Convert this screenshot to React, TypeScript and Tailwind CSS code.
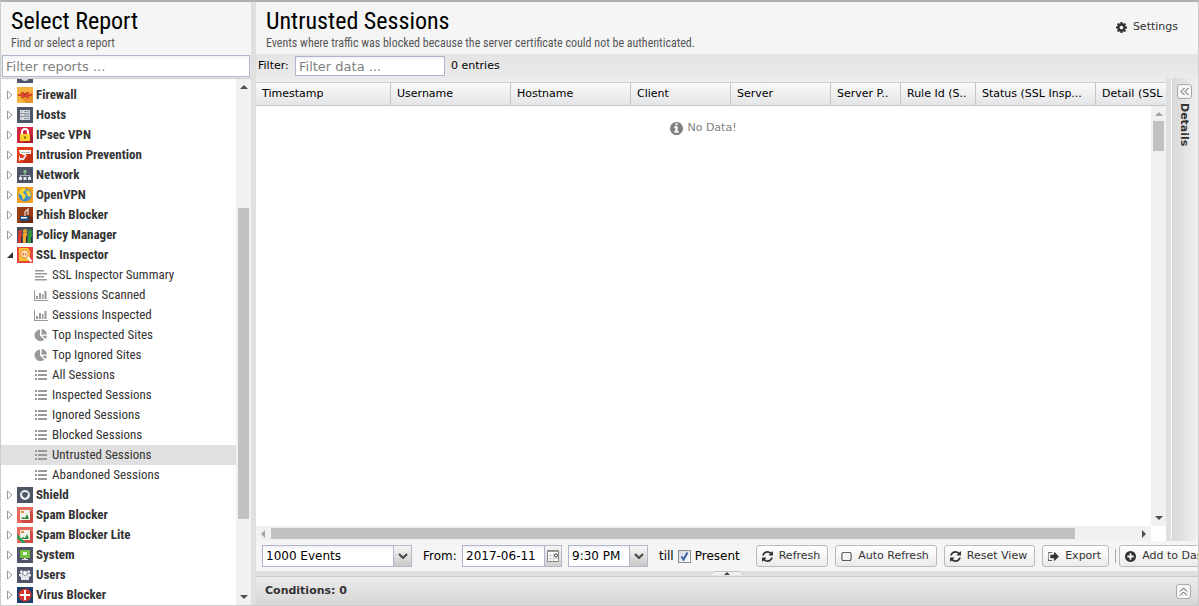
import { useState, type ReactNode } from 'react'

// ===== Icons
const GLYPHS = {
  cog: 'M1152 896q0-106-75-181t-181-75-181 75-75 181 75 181 181 75 181-75 75-181zm512-109v222q0 12-8 23t-20 13l-185 28q-19 54-39 91 35 50 107 138 10 12 10 25t-9 23q-27 37-99 108t-94 71q-12 0-26-9l-138-108q-44 23-91 38-16 136-29 186-7 28-36 28h-222q-14 0-24.5-8.5t-11.5-21.5l-28-184q-49-16-90-37l-141 107q-10 9-25 9-14 0-25-11-126-114-165-168-7-10-7-23 0-12 8-23 15-21 51-66.5t54-70.5q-27-50-41-99l-183-27q-13-2-21-12.5t-8-23.5v-222q0-12 8-23t19-13l186-28q14-46 39-92-40-57-107-138-10-12-10-24 0-10 9-23 26-36 98.5-107.5t94.5-71.5q13 0 26 10l138 107q44-23 91-38 16-136 29-186 7-28 36-28h222q14 0 24.5 8.5t11.5 21.5l28 184q49 16 90 37l142-107q9-9 24-9 13 0 25 10 129 119 165 170 7 8 7 22 0 12-8 23-15 21-51 66.5t-54 70.5q26 50 41 98l183 28q13 2 21 12.5t8 23.5z',
  refresh: 'M1639 1056q0 5-1 7-64 268-268 434.5t-478 166.5q-146 0-282.5-55t-243.5-157l-129 129q-19 19-45 19t-45-19-19-45v-448q0-26 19-45t45-19h448q26 0 45 19t19 45-19 45l-137 137q71 66 161 102t187 36q134 0 250-65t186-179q11-17 53-117 8-23 30-23h192q13 0 22.5 9.5t9.5 22.5zm25-800v448q0 26-19 45t-45 19h-448q-26 0-45-19t-19-45 19-45l138-138q-148-137-349-137-134 0-250 65t-186 179q-11 17-53 117-8 23-30 23h-199q-13 0-22.5-9.5t-9.5-22.5v-7q65-268 270-434.5t480-166.5q146 0 284 55.5t245 156.5l130-129q19-19 45-19t45 19 19 45z',
  square: 'M1312 256h-832q-119 0-203 84t-84 203v706q0 119 84 203t203 84h832q119 0 203-84t84-203v-706q0-119-84-203t-203-84zm-832 128h832q66 0 113 47t47 113v704q0 66-47 113t-113 47h-832q-66 0-113-47t-47-113v-704q0-66 47-113t113-47z',
  signOut: 'M704 1440q0 4 1 20t.5 26.5-3 23.5-10 19.5-20.5 6.5h-320q-119 0-203.5-84.5t-84.5-203.5v-704q0-119 84.5-203.5t203.5-84.5h320q13 0 22.5 9.5t9.5 22.5q0 4 1 20t.5 26.5-3 23.5-10 19.5-20.5 6.5h-320q-66 0-113 47t-47 113v704q0 66 47 113t113 47h312l11.5 1 11.5 3 8 5.5 7 9 2 13.5zm928-544q0 26-19 45l-544 544q-19 19-45 19t-45-19-19-45v-288h-448q-26 0-45-19t-19-45v-384q0-26 19-45t45-19h448v-288q0-26 19-45t45-19 45 19l544 544q19 19 19 45z',
  plus: 'M1344 960v-128q0-26-19-45t-45-19h-256v-256q0-26-19-45t-45-19h-128q-26 0-45 19t-19 45v256h-256q-26 0-45 19t-19 45v128q0 26 19 45t45 19h256v256q0 26 19 45t45 19h128q26 0 45-19t19-45v-256h256q26 0 45-19t19-45zm320-64q0 209-103 385.5t-279.5 279.5-385.5 103-385.5-103-279.5-279.5-103-385.5 103-385.5 279.5-279.5 385.5-103 385.5 103 279.5 279.5 103 385.5z',
  info: 'M1152 1376v-160q0-14-9-23t-23-9h-96v-512q0-14-9-23t-23-9h-320q-14 0-23 9t-9 23v160q0 14 9 23t23 9h96v320h-96q-14 0-23 9t-9 23v160q0 14 9 23t23 9h448q14 0 23-9t9-23zm-128-896v-160q0-14-9-23t-23-9h-192q-14 0-23 9t-9 23v160q0 14 9 23t23 9h192q14 0 23-9t9-23zm640 416q0 209-103 385.5t-279.5 279.5-385.5 103-385.5-103-279.5-279.5-103-385.5 103-385.5 279.5-279.5 385.5-103 385.5 103 279.5 279.5 103 385.5z',
}

function Glyph({ name, className }: { name: keyof typeof GLYPHS; className?: string }) {
  return (
    <svg viewBox="128 128 1536 1536" className={className ?? 'size-[11px] shrink-0'} fill="currentColor" fillRule="evenodd">
      <path d={GLYPHS[name]} />
    </svg>
  )
}

type Kind = 'text' | 'bars' | 'pie' | 'list'

const KIND_ICONS: Record<Kind, ReactNode> = {
  text: <path d="M1 2h9v1.500H1zM1 5h12v1.500H1zM1 8h9v1.500H1zM1 11h12v1.500H1z" />,
  bars: <path d="M0 2h1v10h13v1H0zM2 8h2v3H2zM5 5h2v6H5zM8 6h1.500v5H8zM10.500 3h2v8h-2z" />,
  pie: <path d="M6 1.500v6l4.300 4.300A6 5.800 0 1 1 6 1.500zM7.500 1A5.600 5.600 0 0 1 13 6.500H7.500zM8 7.700h5A6 6 0 0 1 11.500 11z" />,
  list: <path d="M1 2h2v2H1zM4 2h9v2H4zM1 6h2v2H1zM4 6h9v2H4zM1 10h2v2H1zM4 10h9v2H4z" />,
}

const SLATE = '#4d5566'

// 16x16 tiles, one for each app
const APP_ICONS: Record<string, ReactNode> = {
  Events: (
    <>
      <path fill={SLATE} d="M0 0h16v16H0z" />
      <circle cx="8" cy="10" r="4" fill="#dfe3e8" />
    </>
  ),
  Firewall: (
    <>
      <path fill="#f3b13f" d="M0 0h16v16H0z" />
      <path fill="#e8912a" d="M4 11L15 5l1 1v10H9z" />
      <path fill="#d9482b" d="M1 7h3V5h3v1h2V5h3v2h3v2h-3v2H9v-1H7v1H4V9H1z" />
      <path fill="#c23a22" d="M7 6h2v4H7z" />
    </>
  ),
  Hosts: (
    <>
      <path fill={SLATE} d="M0 0h16v16H0z" />
      <path fill="#d9dde1" d="M3 3h10v3H3zM3 6.500h10v3H3zM3 10h10v3H3z" />
      <path fill="#8f97a2" d="M4 4h1v1H4zM4 7.500h1v1H4zM4 11h1v1H4zM7 4h5v1H7zM7 7.500h5v1H7zM7 11h5v1H7z" />
    </>
  ),
  'IPsec VPN': (
    <>
      <path fill="#cf2740" d="M0 0h16v16H0z" />
      <path fill="#a91d33" d="M12 6l4 4v6H6z" />
      <path fill="none" stroke="#fff" strokeWidth="2" d="M5 8V5a3 3 0 0 1 6 0v3" />
      <path fill="#f8d12c" d="M3 7h10v7H3z" />
      <path fill="#a9801a" d="M7 9h2v3H7z" />
    </>
  ),
  'Intrusion Prevention': (
    <>
      <path fill="#e43d1b" d="M0 0h16v16H0z" />
      <path fill="#c43014" d="M9 10l5-5 2 2v9H5z" />
      <path fill="#fff" d="M2 3h12v4H9L8 8H6L5 7H3z" />
      <path fill="#b8b8b8" d="M4 5h9v1H4z" />
      <path fill="#e4e7ea" d="M2 9h1v5H2zM3 11h3l2-3h2l-3 5H3z" />
    </>
  ),
  Network: (
    <>
      <path fill={SLATE} d="M0 0h16v16H0z" />
      <path fill="#7fc38c" d="M6.500 3h3v3h-3z" />
      <path fill="#aab2ba" d="M7.500 6h1v2H13v2h-1V9H4v1H3V8h4.500z" />
      <path fill="#e4e8ea" d="M2 10h3v3H2zM6.500 10h3v3h-3zM11 10h3v3h-3z" />
    </>
  ),
  OpenVPN: (
    <>
      <path fill="#f6a11c" d="M0 0h16v16H0z" />
      <circle cx="8" cy="8" r="6.500" fill="#3d8ed0" />
      <path fill="#f8d733" d="M3 3l3-2 3 1-1 2-2 1 1 2 2 1-1 3-2 2-1-4-3-3zM10 3l3 2 1 3-2 2-2-2-1-3z" />
    </>
  ),
  'Phish Blocker': (
    <>
      <path fill="#9a3d16" d="M0 0h16v16H0z" />
      <path fill="#6d2a10" d="M12 8l4 3v5H5l-2-2z" />
      <path fill="#234f7c" d="M3 9h9v5H3z" />
      <path fill="#fff" d="M4 10h6v1.500H4z" />
      <path fill="none" stroke="#e8e2dc" strokeWidth="1.200" d="M8 9V5l3-3v6" />
    </>
  ),
  'Policy Manager': (
    <>
      <path fill="#48525d" d="M0 0h16v16H0z" />
      <path fill="#d93832" d="M1 7h4v9H1z" />
      <path fill="#f0a72a" d="M6 6h4v10H6z" />
      <path fill="#2f9e3b" d="M11 7h4v9h-4z" />
      <circle cx="3" cy="5" r="2" fill="#d93832" />
      <circle cx="8" cy="4" r="2" fill="#f0a72a" />
      <circle cx="13" cy="5" r="2" fill="#2f9e3b" />
      <path fill="#25313a" d="M4 10h1v6H4zM9 9h1v7H9zM14 10h1v6h-1z" />
    </>
  ),
  'SSL Inspector': (
    <>
      <path fill="#e5453a" d="M0 0h16v16H0z" />
      <path fill="#f6c032" d="M2 1h9l2 3v10H2z" />
      <circle cx="7.500" cy="7" r="4" fill="#fbe9c5" stroke="#f08a2c" />
      <path fill="#e8782a" d="M5.500 6h1.500v2.500H5.500zM8 6h1.500v2.500H8z" />
      <path stroke="#fff" strokeWidth="2" d="M10.500 10l4 4.500" />
    </>
  ),
  Shield: (
    <>
      <path fill={SLATE} d="M0 0h16v16H0z" />
      <circle cx="8" cy="8" r="5" fill="#e9ebee" />
      <path fill={SLATE} d="M5 6l3-1 3 1q0 4-3 5-3-1-3-5z" />
    </>
  ),
  'Spam Blocker': (
    <>
      <path fill="#e8685c" d="M0 0h16v16H0z" />
      <path fill="#cf4a42" d="M13 3l3 3v10H6l-3-3z" />
      <path fill="#f4f1ea" d="M3 3h10v10H3z" />
      <path fill="#2f8f3f" d="M4 12l2-2 2 1 2-4 2 5z" />
      <path fill="#d9903a" d="M4 4h3v2H4z" />
    </>
  ),
  System: (
    <>
      <path fill={SLATE} d="M0 0h16v16H0z" />
      <path fill="#72c33f" d="M3 3h10v8H3z" />
      <path fill="#e9f7df" d="M6 5h4v3H6z" />
      <path fill="#dfe3e6" d="M7 11h2v1h2v1H5v-1h2z" />
    </>
  ),
  Users: (
    <>
      <path fill={SLATE} d="M0 0h16v16H0z" />
      <circle cx="4.500" cy="5" r="1.700" fill="#e4e7ea" />
      <circle cx="11.500" cy="5" r="1.700" fill="#e4e7ea" />
      <path fill="#e4e7ea" d="M2 7h12v2l-2 1v3H4v-3L2 9z" />
      <circle cx="8" cy="6" r="2.400" fill="#fff" stroke={SLATE} strokeWidth=".6" />
    </>
  ),
  'Virus Blocker': (
    <>
      <path fill="#1d3f6b" d="M0 0h16v16H0z" />
      <circle cx="8" cy="8" r="6.500" fill="#d4342b" />
      <path fill="#fff" d="M7 3h2v4h4v2H9v4H7V9H3V7h4z" />
    </>
  ),
}

function AppIcon({ name }: { name: string }) {
  const lite = name === 'Spam Blocker Lite'
  return (
    <svg viewBox="0 0 16 16" className="size-4 shrink-0">
      {APP_ICONS[lite ? 'Spam Blocker' : name]}
      {lite && <path fill="#2aa05a" d="M0 7l9 9H5L0 11z" />}
    </svg>
  )
}

// ===== Data
const GROUPS = [
  'Events', 'Firewall', 'Hosts', 'IPsec VPN', 'Intrusion Prevention', 'Network', 'OpenVPN',
  'Phish Blocker', 'Policy Manager', 'SSL Inspector', 'Shield', 'Spam Blocker',
  'Spam Blocker Lite', 'System', 'Users', 'Virus Blocker',
]

const REPORTS: { title: string; kind: Kind }[] = [
  { title: 'SSL Inspector Summary', kind: 'text' },
  { title: 'Sessions Scanned', kind: 'bars' },
  { title: 'Sessions Inspected', kind: 'bars' },
  { title: 'Top Inspected Sites', kind: 'pie' },
  { title: 'Top Ignored Sites', kind: 'pie' },
  { title: 'All Sessions', kind: 'list' },
  { title: 'Inspected Sessions', kind: 'list' },
  { title: 'Ignored Sessions', kind: 'list' },
  { title: 'Blocked Sessions', kind: 'list' },
  { title: 'Untrusted Sessions', kind: 'list' },
  { title: 'Abandoned Sessions', kind: 'list' },
]

const COLUMNS = [
  { title: 'Timestamp', width: 'w-[135px]' },
  { title: 'Username', width: 'w-[120px]' },
  { title: 'Hostname', width: 'w-[120px]' },
  { title: 'Client', width: 'w-[100px]' },
  { title: 'Server', width: 'w-[100px]' },
  { title: 'Server P..', width: 'w-[70px]' },
  { title: 'Rule Id (S..', width: 'w-[75px]' },
  { title: 'Status (SSL Insp...', width: 'w-[120px]' },
  { title: 'Detail (SSL', width: 'w-[120px]' },
]

// ===== Parts
const CONDENSED = "font-['Roboto_Condensed','Liberation_Sans_Narrow',Roboto,sans-serif]"
const FIELD = 'border border-[#b1b5cb] bg-linear-to-b from-[#eef1f3] to-white to-20% text-black outline-none'

function Arrow({ dir, className }: { dir: 'up' | 'down' | 'left' | 'right'; className?: string }) {
  const d = {
    up: 'M0 6h8L4 2z',
    down: 'M0 2h8L4 6z',
    left: 'M6 0v8L2 4z',
    right: 'M2 0v8l4-4z',
  }[dir]
  return (
    <svg viewBox="0 0 8 8" className={`size-2 shrink-0 ${className ?? 'text-[#505050]'}`} fill="currentColor">
      <path d={d} />
    </svg>
  )
}

function DropButton() {
  return (
    <span className="pointer-events-none flex w-[18px] items-center justify-center border border-l-0 border-[#b5b8c8] bg-linear-to-b from-[#f6f6f6] to-[#c9c9c9]">
      <svg viewBox="0 0 10 6" className="h-[6px] w-[10px]" fill="none" stroke="#444" strokeWidth="2">
        <path d="M1 1l4 4 4-4" />
      </svg>
    </span>
  )
}

function ToolButton({ icon, children }: { icon: keyof typeof GLYPHS; children: ReactNode }) {
  return (
    <button className="flex h-[22px] shrink-0 items-center gap-1.5 rounded-[3px] border border-[#bbb] bg-linear-to-b from-white to-[#ebebeb] pr-[7px] pl-[5px] text-[11px] whitespace-nowrap text-[#333]">
      <Glyph name={icon} />
      {children}
    </button>
  )
}

function CollapseButton({ dir, label }: { dir: 'left' | 'up'; label: string }) {
  return (
    <button aria-label={label} className="flex size-[15px] shrink-0 items-center justify-center rounded-[3px] border border-[#aaa] bg-[#f6f6f6]">
      <svg viewBox="0 0 9 9" className="size-[9px]" fill="none" stroke="#555">
        {dir === 'left' ? <path d="M4.500 1L1 4.500 4.500 8M8.500 1L5 4.500 8.500 8" /> : <path d="M1 4.500L4.500 1 8 4.500M1 8.500L4.500 5 8 8.500" />}
      </svg>
    </button>
  )
}

function Sidebar() {
  const [selected, setSelected] = useState('Untrusted Sessions')

  return (
    <aside className="flex w-[250px] shrink-0 flex-col">
      <header className={`h-[53px] bg-[#f5f5f5] px-2.5 pt-[5px] ${CONDENSED}`}>
        <h1 className="text-2xl leading-7 text-black">Select Report</h1>
        <p className="text-xs leading-4 text-[#555]">Find or select a report</p>
      </header>
      <div className="flex h-6 border-b border-[#ccc] bg-[#e8e8e8] px-px">
        <input aria-label="Filter reports" placeholder="Filter reports ..." className={`h-[22px] w-full px-[3px] text-[13px] placeholder:text-[#808080] ${FIELD}`} />
      </div>

      <div className="flex min-h-0 flex-1">
        <ul className={`flex min-w-0 flex-1 flex-col justify-end overflow-hidden bg-white text-[13px] text-[#333] ${CONDENSED}`}>
          {GROUPS.map((g) => (
            <li key={g} className="shrink-0">
              <button className="flex h-5 w-full items-center gap-[3px] pl-[5px] text-left font-bold">
                <svg viewBox="0 0 8 10" className="h-2.5 w-2 shrink-0">
                  {g === 'SSL Inspector'
                    ? <path d="M7 2v6H1z" fill="#333" />
                    : <path d="M1.500 1v8l4.500-4z" fill="#fff" stroke="#999" />}
                </svg>
                <AppIcon name={g} />
                {g}
              </button>
              {g === 'SSL Inspector' && (
                <ul>
                  {REPORTS.map((r) => (
                    <li key={r.title}>
                      <button
                        onClick={() => setSelected(r.title)}
                        className={`flex h-5 w-full items-center gap-1 pl-[33px] text-left ${r.title === selected ? 'bg-[#e0e0e0]' : ''}`}
                      >
                        <svg viewBox="0 0 14 14" className="size-[14px] shrink-0" fill="#999">{KIND_ICONS[r.kind]}</svg>
                        {r.title}
                      </button>
                    </li>
                  ))}
                </ul>
              )}
            </li>
          ))}
        </ul>
        <div className="flex w-[15px] flex-col items-center bg-[#f1f1f1] py-1">
          <Arrow dir="up" />
          <div className="flex w-full flex-1 flex-col px-0.5">
            <div className="flex-[117]" />
            <div className="flex-[311] bg-[#c1c1c1]" />
            <div className="flex-[74]" />
          </div>
          <Arrow dir="down" />
        </div>
      </div>
    </aside>
  )
}

function Grid() {
  return (
    <div className="flex min-w-0 flex-1 flex-col">
      <div className="overflow-hidden border-t border-[#d0d0d0] bg-white">
        <table className="w-[960px] table-fixed border-separate border-spacing-0 text-[11px]">
          <thead>
            <tr className="h-[23px] bg-linear-to-b from-[#f9f9f9] to-[#e3e4e6]">
              {COLUMNS.map((c) => (
                <th key={c.title} className={`overflow-hidden border-r border-b border-[#c5c5c5] p-0 pb-px pl-1.5 text-left leading-5 font-normal whitespace-nowrap text-black ${c.width}`}>
                  {c.title}
                </th>
              ))}
            </tr>
          </thead>
        </table>
      </div>

      <div className="flex min-h-0 flex-1 bg-white">
        <div className="flex flex-1 items-start justify-center gap-1 pt-3.5 text-[11px] text-[#808080]">
          <div className="flex items-center gap-1">
            <Glyph name="info" className="size-[13px] shrink-0" />
            <span>No Data!</span>
          </div>
        </div>
        <div className="flex w-[15px] flex-col items-center bg-[#f1f1f1] py-1">
          <Arrow dir="up" className="text-[#a3a3a3]" />
          <div className="flex w-full flex-1 flex-col px-0.5 pt-[3px]">
            <div className="h-[30px] bg-[#c1c1c1]" />
          </div>
          <Arrow dir="down" />
        </div>
      </div>
      <div className="flex h-[15px] bg-white">
        <div className="flex flex-1 items-center bg-[#f1f1f1] px-[3px]">
          <Arrow dir="left" className="text-[#a3a3a3]" />
          <div className="flex h-[11px] flex-1 px-1">
            <div className="w-[93%] bg-[#c1c1c1]" />
          </div>
          <Arrow dir="right" />
        </div>
        <div className="w-[15px]" />
      </div>
    </div>
  )
}

function BottomBar() {
  const [present, setPresent] = useState(true)

  return (
    <div className="flex h-[30px] items-center overflow-hidden bg-[#f5f5f5] pl-1.5 text-xs text-black">
      <div className="flex h-[22px] w-[150px] shrink-0">
        <select aria-label="Limit" className={`min-w-0 flex-1 appearance-none px-[3px] ${FIELD}`}>
          <option>1000 Events</option>
        </select>
        <DropButton />
      </div>
      <label htmlFor="from" className="ml-[11px] w-[33px] shrink-0">From:</label>
      <div className="ml-1.5 flex h-[22px] w-[100px] shrink-0">
        <input id="from" defaultValue="2017-06-11" className={`min-w-0 flex-1 px-[3px] ${FIELD}`} />
        <button aria-label="Pick a date" className="flex w-[17px] items-center justify-center border border-l-0 border-[#b5b8c8] bg-linear-to-b from-[#f6f6f6] to-[#d0d0d0]">
          <svg viewBox="0 0 12 12" className="size-3">
            <path fill="#fff" stroke="#888" d="M.5.5h11v11H.5z" />
            <path fill="#999" d="M1 1h10v1H1z" />
            <path stroke="#d4d4d4" d="M1 5.500h10M1 8.500h10M3.500 3v8M6.500 3v8" />
            <circle cx="9" cy="5.500" r="1.500" fill="#fff" stroke="#333" />
          </svg>
        </button>
      </div>
      <div className="ml-1.5 flex h-[22px] w-20 shrink-0">
        <select aria-label="Time" className={`min-w-0 flex-1 appearance-none px-[3px] ${FIELD}`}>
          <option>9:30 PM</option>
        </select>
        <DropButton />
      </div>
      <span className="ml-[11px] shrink-0">till</span>
      <label className="ml-1 flex w-[67px] shrink-0 items-center gap-1">
        <input
          type="checkbox"
          checked={present}
          onChange={(e) => setPresent(e.target.checked)}
          className="peer size-[13px] shrink-0 appearance-none border border-[#8a8f94] bg-linear-to-br from-[#d5dade] to-white"
        />
        <svg viewBox="0 0 13 13" className="pointer-events-none -ml-[17px] hidden size-[13px] shrink-0 peer-checked:block" fill="none" stroke="#3f5fa8" strokeWidth="2">
          <path d="M3.500 6.500l2 3 4-7" />
        </svg>
        Present
      </label>
      <div className="ml-[11px] flex shrink-0 items-center gap-[7px]">
        <ToolButton icon="refresh">Refresh</ToolButton>
        <ToolButton icon="square">Auto Refresh</ToolButton>
        <ToolButton icon="refresh">Reset View</ToolButton>
        <ToolButton icon="signOut">Export</ToolButton>
      </div>
      <div className="mr-[3px] ml-1.5 h-3.5 w-px shrink-0 bg-[#aca899]" />
      <ToolButton icon="plus">Add to Dashboard</ToolButton>
    </div>
  )
}

export default function App() {
  return (
    <div className="flex h-dvh overflow-hidden border border-t-2 border-[#ccc] border-t-[#b0b0b0] bg-[#e0e0e0] font-['DejaVu_Sans',sans-serif]">
      <Sidebar />
      <div className="w-[5px] shrink-0 bg-[#e0e0e0]" />

      <main className="flex min-w-0 flex-1 flex-col">
        <header className="flex h-[52px] items-start justify-between bg-[#f5f5f5] pt-[5px] pr-5 pl-2.5">
          <div className={CONDENSED}>
            <h1 className="text-2xl leading-7 text-black">Untrusted Sessions</h1>
            <p className="text-xs leading-4 text-[#555]">Events where traffic was blocked because the server certificate could not be authenticated.</p>
          </div>
          <button className="flex h-10 items-center gap-1.5 text-[11px] text-[#333]">
            <Glyph name="cog" />
            Settings
          </button>
        </header>

        <div className="flex h-6 items-center bg-linear-to-b from-[#e4e4e4] to-[#ebebeb] pl-0.5 text-[11px] text-black">
          <label htmlFor="filter" className="w-[37px]">Filter:</label>
          <input id="filter" placeholder="Filter data ..." className={`h-5 w-[150px] px-[3px] text-[13px] placeholder:text-[#808080] ${FIELD}`} />
          <span className="ml-1.5">0 entries</span>
        </div>

        <div className="flex min-h-0 flex-1">
          <div className="flex min-w-0 flex-1 bg-[#ececec] pt-1">
            <Grid />
          </div>
          <div className="w-[5px] bg-[#e0e0e0]" />
          <div className="flex w-[27px] flex-col items-center gap-1 border-l border-[#f5f5f5] bg-linear-to-r from-[#d8d8d8] to-[#f0f0f0] pt-1.5 pr-0.5">
            <CollapseButton dir="left" label="Expand details" />
            <span className="text-[11px] leading-4 font-bold text-[#333] [writing-mode:vertical-rl]">Details</span>
          </div>
        </div>

        <BottomBar />

        <div className="flex h-[5px] items-end justify-center bg-[#e0e0e0]">
          <svg viewBox="0 0 34 5" className="h-[5px] w-[34px]">
            <path fill="#f0f0f0" stroke="#c4c4c4" d="M0 4.500L4 .5h26l4 4" />
            <path fill="#444" d="M14 4h6l-3-3z" />
          </svg>
        </div>
        <footer className="flex h-[29px] items-center justify-between border-t border-[#ccc] bg-linear-to-b from-[#ececec] to-[#d6d6d6] pr-[7px] pl-[9px]">
          <h2 className="text-[11px] font-bold text-[#333]">Conditions: 0</h2>
          <CollapseButton dir="up" label="Expand conditions" />
        </footer>
      </main>
    </div>
  )
}
